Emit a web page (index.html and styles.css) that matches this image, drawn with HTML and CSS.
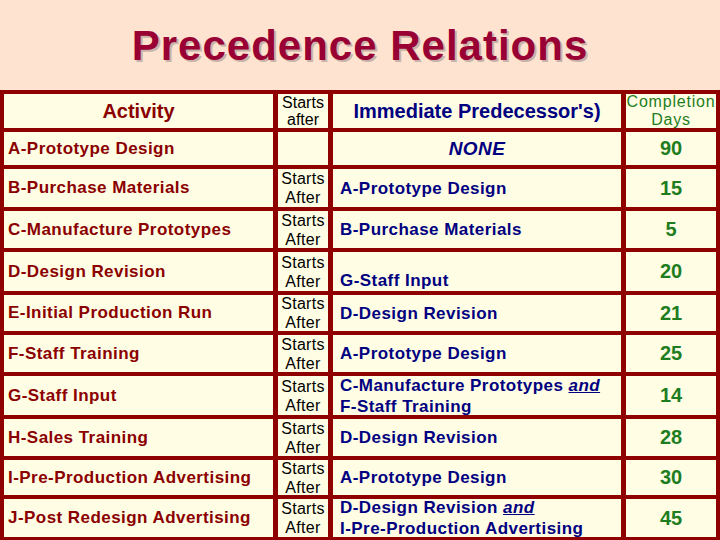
FILE: index.html
```html
<!DOCTYPE html>
<html>
<head>
<meta charset="utf-8">
<title>Precedence Relations</title>
<link rel="stylesheet" href="styles.css">
</head>
<body>
<h1 class="title">Precedence Relations</h1>
<div class="grid">
  <div class="cell hd-act"><span>Activity</span></div>
  <div class="cell hd-start"><span>Starts<br>after</span></div>
  <div class="cell hd-pred"><span>Immediate Predecessor's)</span></div>
  <div class="cell hd-days"><span>Completion<br>Days</span></div>

  <div class="cell act"><span>A-Prototype Design</span></div>
  <div class="cell start"></div>
  <div class="cell pred none"><span>NONE</span></div>
  <div class="cell days"><span>90</span></div>

  <div class="cell act"><span>B-Purchase Materials</span></div>
  <div class="cell start"><span>Starts<br>After</span></div>
  <div class="cell pred"><span>A-Prototype Design</span></div>
  <div class="cell days"><span>15</span></div>

  <div class="cell act"><span>C-Manufacture Prototypes</span></div>
  <div class="cell start"><span>Starts<br>After</span></div>
  <div class="cell pred"><span>B-Purchase Materials</span></div>
  <div class="cell days"><span>5</span></div>

  <div class="cell act"><span>D-Design Revision</span></div>
  <div class="cell start"><span>Starts<br>After</span></div>
  <div class="cell pred low"><span>G-Staff Input</span></div>
  <div class="cell days"><span>20</span></div>

  <div class="cell act"><span>E-Initial Production Run</span></div>
  <div class="cell start"><span>Starts<br>After</span></div>
  <div class="cell pred"><span>D-Design Revision</span></div>
  <div class="cell days"><span>21</span></div>

  <div class="cell act"><span>F-Staff Training</span></div>
  <div class="cell start"><span>Starts<br>After</span></div>
  <div class="cell pred"><span>A-Prototype Design</span></div>
  <div class="cell days"><span>25</span></div>

  <div class="cell act"><span>G-Staff Input</span></div>
  <div class="cell start"><span>Starts<br>After</span></div>
  <div class="cell pred"><span>C-Manufacture Prototypes <u class="and">and</u><br>F-Staff Training</span></div>
  <div class="cell days"><span>14</span></div>

  <div class="cell act"><span>H-Sales Training</span></div>
  <div class="cell start"><span>Starts<br>After</span></div>
  <div class="cell pred"><span>D-Design Revision</span></div>
  <div class="cell days"><span>28</span></div>

  <div class="cell act"><span>I-Pre-Production Advertising</span></div>
  <div class="cell start"><span>Starts<br>After</span></div>
  <div class="cell pred"><span>A-Prototype Design</span></div>
  <div class="cell days"><span>30</span></div>

  <div class="cell act"><span>J-Post Redesign Advertising</span></div>
  <div class="cell start"><span>Starts<br>After</span></div>
  <div class="cell pred"><span>D-Design Revision <u class="and">and</u><br>I-Pre-Production Advertising</span></div>
  <div class="cell days"><span>45</span></div>
</div>
</body>
</html>
```
FILE: styles.css
```css
html, body {
  margin: 0;
  padding: 0;
}
body {
  width: 720px;
  height: 540px;
  overflow: hidden;
  background: #fde3d0;
  font-family: "Liberation Sans", Arial, sans-serif;
}
.title {
  margin: 0;
  height: 90px;
  padding-top: 22px;
  box-sizing: border-box;
  line-height: 48px;
  font-size: 42px;
  font-weight: bold;
  letter-spacing: 1px;
  text-align: center;
  color: #990033;
  text-shadow: 2px 2px 0 #c9b2a8;
}
.grid {
  display: grid;
  grid-template-columns: 269px 50px 288px 90px;
  grid-template-rows: 34px 33px 38px 37px 39px 36px 37px 39px 37px 35px 38px;
  column-gap: 5px;
  row-gap: 4px;
  padding: 4px;
  background: #8f0000;
}
.cell {
  background: #fffde4;
  display: flex;
  align-items: center;
  overflow: hidden;
  white-space: nowrap;
}
.hd-act {
  justify-content: center;
  color: #8b0000;
  font-weight: bold;
  font-size: 20px;
}
.hd-start {
  justify-content: center;
  text-align: center;
  font-size: 16px;
  line-height: 17px;
  color: #000;
}
.hd-pred {
  justify-content: center;
  color: #000080;
  font-weight: bold;
  font-size: 20px;
}
.hd-days {
  justify-content: center;
  text-align: center;
  color: #1e7d1e;
  font-size: 16px;
  letter-spacing: 0.8px;
  line-height: 18px;
}
.act {
  padding-left: 4px;
  color: #8b0000;
  font-weight: bold;
  font-size: 17px;
  letter-spacing: 0.45px;
}
.start {
  justify-content: center;
  text-align: center;
  font-size: 16px;
  line-height: 19px;
  letter-spacing: 0.3px;
  color: #000;
}
.pred {
  padding-left: 7px;
  color: #000080;
  font-weight: bold;
  font-size: 17px;
  letter-spacing: 0.45px;
  line-height: 21px;
}
.pred.none {
  justify-content: center;
  padding-left: 0;
  font-style: italic;
  font-size: 19px;
}
.pred.low {
  align-items: flex-end;
}
.and {
  font-style: italic;
}
.days {
  justify-content: center;
  color: #1e7d1e;
  font-weight: bold;
  font-size: 20px;
}
```
